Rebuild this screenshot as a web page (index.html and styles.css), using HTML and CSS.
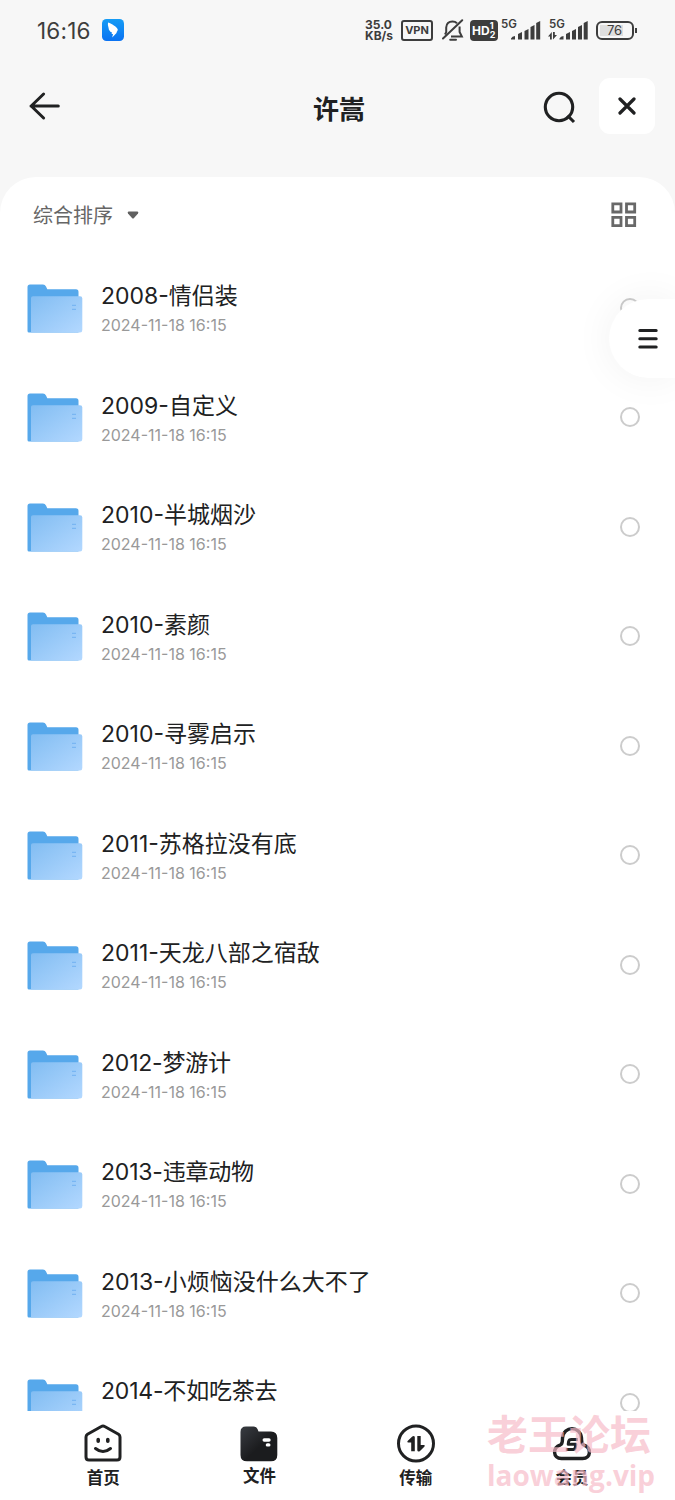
FILE: index.html
```
<!DOCTYPE html>
<html lang="zh">
<head>
    <meta charset="UTF-8">
    <meta name="viewport" content="width=device-width, initial-scale=1.0">
    <title>许嵩</title>
    <link rel="stylesheet" href="styles.css">
</head>
<body>
    <svg class="defs" width="0" height="0">
        <defs>
            <linearGradient id="front" x1="0" y1="0" x2="1" y2="1">
                <stop offset="0" stop-color="#82bdf2"/>
                <stop offset="1" stop-color="#b3d8ff"/>
            </linearGradient>
            <linearGradient id="dark" x1="0" y1="0" x2="1" y2="1">
                <stop offset="0" stop-color="#393c42"/>
                <stop offset="0.55" stop-color="#1b1c1e"/>
            </linearGradient>
            <linearGradient id="blue" x1="0" y1="0" x2="0" y2="1">
                <stop offset="0" stop-color="#159cf5"/>
                <stop offset="1" stop-color="#0a72f2"/>
            </linearGradient>
            <symbol id="folder" viewBox="0 0 56 49">
                <path d="M0.5 3Q0.5 0.5 3 0.5H16Q18 0.5 19 2.5L20.3 5.3H49Q51.5 5.3 51.5 8V48.5H2Q0.5 48.5 0.5 47Z" fill="#56a8eb"/>
                <path d="M4 14Q4 12.3 6 12.3H53Q55.3 12.3 55.3 14.5V46Q55.3 48.5 53 48.5H4Z" fill="url(#front)"/>
                <path d="M45 21.4h4M45 25.4h4" stroke="#79b6f3" stroke-width="1.2"/>
            </symbol>
        </defs>
    </svg>

    <div class="phone">
        <div class="status-bar">
            <span class="clock">16:16</span>
            <svg class="ding" width="22" height="22" viewBox="0 0 22 22">
                <rect width="22" height="22" rx="4.5" fill="url(#blue)"/>
                <path d="M6 3.5C10 5 14.5 7.5 15.7 10.2C16 11.4 15 12.4 14.3 13.6H15L10.2 18.5L11 15H9.6L10 13.6Q8 13 7.5 11.5Q6.6 10.5 6.6 9Q5.5 6 6 3.5Z" fill="#fff"/>
            </svg>
            <div class="speed"><span>35.0</span><span>KB/s</span></div>
            <span class="vpn">VPN</span>
            <svg class="bell" width="22" height="24" viewBox="0 0 22 24" fill="none" stroke="#3d3d3d" stroke-width="2">
                <path d="M4.2 14.5V9.5C4.5 5.5 7.2 3.5 10.5 3.5C12.5 3.5 14 4.2 15 5.2M17.6 8.5V14L19.8 18.4H9M4.2 14.2L3 16.5"/>
                <path d="M1 20.5L20.2 2.2M8.2 21.8H14" stroke-linecap="round"/>
            </svg>
            <div class="hd"><b>HD</b><div class="hd-nums"><span>1</span><span>2</span></div></div>
            <svg class="signal" width="39" height="24" viewBox="0 0 39 24" fill="#3d3d3d">
                <text x="-1" y="10" class="net">5G</text>
                <path d="M9 21.5V20.5Q10 18 13 18V21.5ZM16 21.5V16L20 14V21.5ZM22.5 21.5V13L26.5 11V21.5ZM28.5 21.5V9L32.5 7V21.5ZM34.2 21.5V5L38.2 3V21.5Z"/>
            </svg>
            <svg class="signal second" width="41" height="24" viewBox="0 0 41 24" fill="#3d3d3d">
                <text x="1" y="10" class="net">5G</text>
                <path d="M0 18.5L3.8 14V21.5H2V18.5ZM5 14H6.8V17H9L5 21.5Z"/>
                <path d="M11.5 21.5V20.5Q12.5 18 15.5 18V21.5ZM18 21.5V16L22 14V21.5ZM24 21.5V13L28 11V21.5ZM30 21.5V9L34 7V21.5ZM35.7 21.5V5L39.7 3V21.5Z"/>
            </svg>
            <div class="battery"><span>76</span></div>
            <i class="battery-tip"></i>
        </div>

        <header class="header">
            <svg class="back" width="32" height="30" viewBox="0 0 32 30" fill="none" stroke="#202122" stroke-width="3" stroke-linecap="round" stroke-linejoin="round">
                <path d="M29.3 15H2M14.6 3L2.2 15L14.6 27"/>
            </svg>
            <h1>许嵩</h1>
            <svg class="search" width="34" height="34" viewBox="0 0 34 34" fill="none" stroke="#202122" stroke-width="3.1">
                <circle cx="16" cy="16" r="13.7"/>
                <path d="M24.5 24.5L31 31"/>
            </svg>
            <div class="close">
                <svg width="18" height="18" viewBox="0 0 18 18" stroke="#202122" stroke-width="3.2" stroke-linecap="round">
                    <path d="M2 2L16 16M16 2L2 16"/>
                </svg>
            </div>
        </header>

        <main class="panel">
            <div class="toolbar">
                <span class="sort">综合排序</span>
                <svg class="caret" width="12" height="8" viewBox="0 0 12 8"><path d="M1.5 0.5H10.5Q12 0.8 11 2.5L7 7Q6 8 5 7L1 2.5Q0 0.8 1.5 0.5Z" fill="#606060"/></svg>
                <svg class="grid" width="26" height="26" viewBox="0 0 26 26" fill="none" stroke="#686868" stroke-width="2.8">
                    <path d="M1.8 1.8H10V10H1.8ZM15.5 1.8H23.7V10H15.5ZM1.8 15.4H10V23.6H1.8ZM15.5 15.4H23.7V23.6H15.5Z"/>
                </svg>
            </div>

            <div class="list">
                <div class="row">
                    <svg class="folder"><use href="#folder"/></svg>
                    <div class="info"><div class="name">2008-情侣装</div><div class="date">2024-11-18 16:15</div></div>
                    <i class="radio"></i>
                </div>
                <div class="row">
                    <svg class="folder"><use href="#folder"/></svg>
                    <div class="info"><div class="name">2009-自定义</div><div class="date">2024-11-18 16:15</div></div>
                    <i class="radio"></i>
                </div>
                <div class="row">
                    <svg class="folder"><use href="#folder"/></svg>
                    <div class="info"><div class="name">2010-半城烟沙</div><div class="date">2024-11-18 16:15</div></div>
                    <i class="radio"></i>
                </div>
                <div class="row">
                    <svg class="folder"><use href="#folder"/></svg>
                    <div class="info"><div class="name">2010-素颜</div><div class="date">2024-11-18 16:15</div></div>
                    <i class="radio"></i>
                </div>
                <div class="row">
                    <svg class="folder"><use href="#folder"/></svg>
                    <div class="info"><div class="name">2010-寻雾启示</div><div class="date">2024-11-18 16:15</div></div>
                    <i class="radio"></i>
                </div>
                <div class="row">
                    <svg class="folder"><use href="#folder"/></svg>
                    <div class="info"><div class="name">2011-苏格拉没有底</div><div class="date">2024-11-18 16:15</div></div>
                    <i class="radio"></i>
                </div>
                <div class="row">
                    <svg class="folder"><use href="#folder"/></svg>
                    <div class="info"><div class="name">2011-天龙八部之宿敌</div><div class="date">2024-11-18 16:15</div></div>
                    <i class="radio"></i>
                </div>
                <div class="row">
                    <svg class="folder"><use href="#folder"/></svg>
                    <div class="info"><div class="name tight">2012-梦游计</div><div class="date">2024-11-18 16:15</div></div>
                    <i class="radio"></i>
                </div>
                <div class="row">
                    <svg class="folder"><use href="#folder"/></svg>
                    <div class="info"><div class="name tight">2013-违章动物</div><div class="date">2024-11-18 16:15</div></div>
                    <i class="radio"></i>
                </div>
                <div class="row">
                    <svg class="folder"><use href="#folder"/></svg>
                    <div class="info"><div class="name">2013-小烦恼没什么大不了</div><div class="date">2024-11-18 16:15</div></div>
                    <i class="radio"></i>
                </div>
                <div class="row">
                    <svg class="folder"><use href="#folder"/></svg>
                    <div class="info"><div class="name tight">2014-不如吃茶去</div></div>
                    <i class="radio"></i>
                </div>
            </div>
        </main>

        <nav class="tabs">
            <div class="tab">
                <svg width="40" height="40" viewBox="0 0 40 40" fill="none" stroke="#202122" stroke-width="3" stroke-linecap="round" stroke-linejoin="round">
                    <path d="M18.3 3.5Q20 2.4 21.7 3.5L35.5 11.2Q37 12.2 37 14V34Q37 37 34 37H6Q3 37 3 34V14Q3 12.2 4.5 11.2Z"/>
                    <path d="M12.5 25.5Q20 31.5 27.5 25.5"/>
                    <path d="M15.2 16.5V18.3M24.8 16.5V18.3" stroke-width="3.6"/>
                </svg>
                <span>首页</span>
            </div>
            <div class="tab file">
                <svg width="40" height="40" viewBox="0 0 40 40">
                    <path d="M1.5 9Q1.5 3.5 7 3.5H14.5Q17.5 3.5 18.5 6L19.5 8.5H32Q38.3 8.5 38.3 15V32Q38.3 38.3 32 38.3H8Q1.5 38.3 1.5 32Z" fill="url(#dark)"/>
                    <path d="M25.2 17H30M28.4 21.9H29.8" stroke="#fff" stroke-width="3.4" stroke-linecap="round"/>
                </svg>
                <span>文件</span>
            </div>
            <div class="tab">
                <svg width="40" height="40" viewBox="0 0 40 40">
                    <circle cx="20" cy="20.5" r="17.5" fill="none" stroke="#202122" stroke-width="3"/>
                    <path d="M18.8 14V28.2H15.2V19.5H12Q10.8 19.2 11.6 18L16.3 13.4Q18.3 12.2 18.8 14ZM21.3 13H24.7V22H28Q29.4 22.3 28.5 23.6L24 28Q21.8 29.3 21.3 27.3Z" fill="#202122"/>
                </svg>
                <span>传输</span>
            </div>
            <div class="tab">
                <svg width="42" height="40" viewBox="0 0 42 40" fill="none" stroke="#202122" stroke-width="3.4" stroke-linejoin="round">
                    <path d="M10.5 35.5C1.5 35.5 1.5 24.5 9.5 21.8C11.7 20.8 11.3 19 11.5 15C12.5 2.5 29.5 2.5 30.5 15C30.7 19 30.3 20.8 32.5 21.8C40.5 24.5 40.5 35.5 31.5 35.5Z"/>
                    <path d="M26.8 16.4H20.5Q18 16.4 17.6 18.6L17.2 21.2H24.8L24.3 24.5Q24 26.6 22 26.6H14.8" stroke-width="3"/>
                </svg>
                <span>会员</span>
            </div>
        </nav>

        <div class="menu-btn">
            <svg width="22" height="22" viewBox="0 0 22 22" stroke="#202122" stroke-width="3" stroke-linecap="round">
                <path d="M2.8 2.6H19.2M2.8 10.8H19.2M2.8 19H19.2"/>
            </svg>
        </div>
        <div class="watermark">
            <div class="wm-title">老王论坛</div>
            <div class="wm-url">laowang.vip</div>
        </div>
    </div>
</body>
</html>
```
FILE: styles.css
```
* {
    box-sizing: border-box;
}

body {
    margin: 0;
    font-family: Inter, "Noto Sans CJK SC", sans-serif;
    background: #f7f7f7;
    color: #202122;
}

svg {
    display: block;
    flex: none;
}

.defs {
    position: absolute;
}

.phone {
    position: relative;
    width: 675px;
    height: 1500px;
    overflow: hidden;
    display: flex;
    flex-direction: column;
}

/* status bar */
.status-bar {
    height: 60px;
    display: flex;
    align-items: center;
    padding-left: 37px;
    color: #3d3d3d;
}

.clock {
    width: 65px;
    font-size: 22.5px;
    letter-spacing: 0.2px;
}

.speed {
    width: 30px;
    margin-left: 241px;
    display: flex;
    flex-direction: column;
    font-size: 12px;
    line-height: 11px;
    font-weight: 700;
    white-space: nowrap;
}

.vpn {
    width: 32px;
    height: 21px;
    margin-left: 6px;
    border: 2.5px solid #3d3d3d;
    border-radius: 3px;
    font-size: 11px;
    line-height: 17px;
    font-weight: 700;
    text-align: center;
}

.bell {
    margin-left: 9px;
}

.hd {
    width: 28px;
    height: 21px;
    margin-left: 6px;
    padding-left: 2px;
    border-radius: 4px;
    background: #3d3d3d;
    color: #fff;
    display: flex;
    align-items: center;
    font-size: 12px;
}

.hd-nums {
    display: flex;
    flex-direction: column;
    font-size: 9px;
    line-height: 9px;
    font-weight: 700;
}

.signal {
    margin-left: 4px;
    overflow: visible;
}

.second {
    margin-left: 7px;
}

.net {
    font-size: 11.5px;
    font-weight: 600;
}

.battery {
    width: 38px;
    height: 19px;
    margin-left: 7px;
    padding: 2px;
    border: 2px solid #3d3d3d;
    border-radius: 6px;
    font-size: 13px;
    line-height: 11px;
    text-align: center;
}

.battery span {
    display: block;
    width: 23px;
    padding-left: 6px;
    background: #dedede;
}

.battery-tip {
    width: 2px;
    height: 5px;
    margin-left: 1px;
    background: #3d3d3d;
}

/* header */
.header {
    height: 117px;
    display: flex;
    align-items: flex-start;
    padding: 18px 20px 0 29px;
}

.back {
    margin-top: 13px;
}

h1 {
    width: 100px;
    margin: 13px 0 0 228px;
    font-size: 26px;
    line-height: 38px;
    font-weight: 700;
    text-align: center;
}

.search {
    margin: 13px 0 0 154px;
}

.close {
    width: 56px;
    height: 56px;
    margin-left: auto;
    border-radius: 11px;
    background: #fff;
    display: flex;
    align-items: center;
    justify-content: center;
}

/* file list */
.panel {
    height: 1233.5px;
    flex: none;
    background: #fff;
    border-radius: 36px 36px 0 0;
    overflow: hidden;
}

.toolbar {
    height: 75.6px;
    padding: 0 38px 0 33px;
    display: flex;
    align-items: center;
}

.sort {
    margin-top: -1px;
    font-size: 20px;
    color: #666;
}

.caret {
    margin-left: 14px;
}

.grid {
    margin-left: auto;
}

.row {
    height: 109.5px;
    padding: 0 35px 0 27px;
    display: flex;
    align-items: flex-start;
}

.folder {
    width: 56px;
    height: 49px;
    margin-top: 31px;
}

.info {
    margin: 26.7px 0 0 18px;
    flex: 1;
}

.name {
    font-size: 23px;
    line-height: 34px;
    white-space: nowrap;
}

.tight {
    letter-spacing: -0.2px;
}

.date {
    margin-top: 1px;
    font-size: 16px;
    line-height: 22px;
    color: #999;
}

.radio {
    width: 20px;
    height: 20px;
    margin-top: 45px;
    border: 2px solid #ccc;
    border-radius: 50%;
}

/* bottom tabs */
.tabs {
    height: 89.5px;
    flex: none;
    padding: 0 25px;
    background: #fff;
    display: flex;
}

.tab {
    flex: 1;
    padding-top: 12px;
    display: flex;
    flex-direction: column;
    align-items: center;
    font-size: 16.5px;
    line-height: 24px;
    font-weight: 700;
}

.tab span {
    margin-top: 3px;
}

.file span {
    margin-top: 1px;
}

/* overlays */
.menu-btn {
    position: absolute;
    top: 299px;
    right: 0;
    width: 66px;
    height: 79px;
    padding-left: 28px;
    border-radius: 40px 0 0 40px;
    background: #fff;
    box-shadow: 0 0 40px rgba(0, 0, 0, 0.06);
    display: flex;
    align-items: center;
}

.watermark {
    position: absolute;
    left: 487px;
    top: 1410px;
    color: rgba(247, 187, 200, 0.7);
    font-family: "Open Sans", "Noto Sans CJK SC", sans-serif;
    font-weight: 700;
    white-space: nowrap;
}

.wm-title {
    font-size: 41px;
    line-height: 48px;
}

.wm-url {
    font-size: 28px;
    line-height: 34px;
}
```
